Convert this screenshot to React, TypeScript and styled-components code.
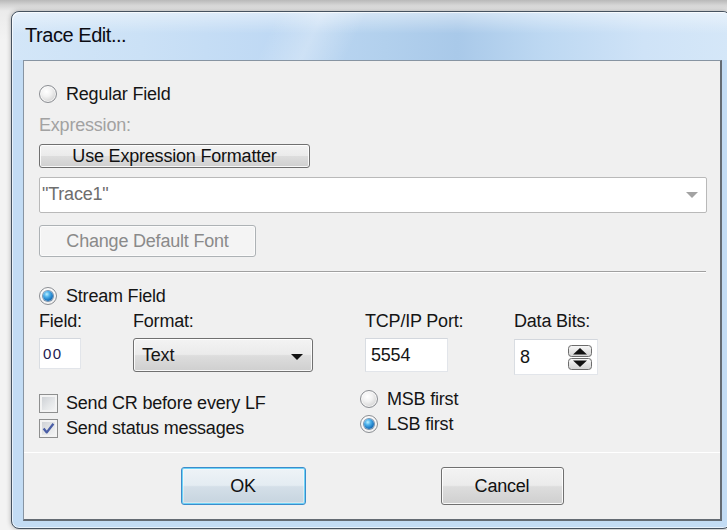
import React from "react";
import styled, { createGlobalStyle, css } from "styled-components";

const UI_FONT = `"Liberation Sans", Arial, sans-serif`;

const GlobalStyle = createGlobalStyle`
  html, body { margin: 0; padding: 0; }
  body {
    width: 727px;
    height: 530px;
    overflow: hidden;
    background: linear-gradient(180deg, #b9b9b9 0px, #d4d4d4 5px, #ebebeb 11px, #f3f3f3 40px);
    font-family: ${UI_FONT};
  }
`;

const Desktop = styled.div`
  width: 727px;
  height: 530px;
  box-sizing: border-box;
  padding: 11px 0 0 11px;
  overflow: hidden;
`;

const Window = styled.div`
  width: 720px;
  height: 518px;
  box-sizing: border-box;
  display: flex;
  flex-direction: column;
  border: 1px solid #46525f;
  border-radius: 8px;
  background: #c3dcf4;
  box-shadow: inset 0 0 0 1px rgba(255, 255, 255, 0.6), 0 0 5px rgba(0, 0, 0, 0.3);
  overflow: hidden;
`;

const TitleBar = styled.div`
  flex: none;
  height: 48px;
  box-sizing: border-box;
  display: flex;
  align-items: center;
  padding: 0 0 2px 13px;
  border-radius: 7px 7px 0 0;
  background:
    linear-gradient(115deg, rgba(255, 255, 255, 0) 36%, rgba(255, 255, 255, 0.28) 42%, rgba(255, 255, 255, 0) 48%),
    linear-gradient(180deg, rgba(255, 255, 255, 0.45) 0%, rgba(255, 255, 255, 0) 45%),
    linear-gradient(90deg, #d3e6f8 0%, #cbe1f6 18%, #bfd9f4 36%, #b2d0ed 52%, #a9c9e9 62%, #bdd8f2 74%, #cfe3f7 88%, #d5e7f8 100%);
  box-shadow: inset 1px 1px 0 rgba(255, 255, 255, 0.7);
`;

const Title = styled.span`
  font-size: 20px;
  letter-spacing: -0.45px;
  color: #0b0b12;
  white-space: nowrap;
`;

const Frame = styled.div`
  flex: 1;
  min-height: 0;
  padding: 0 8px 7px 11px;
`;

const Client = styled.div`
  height: 100%;
  box-sizing: border-box;
  display: flex;
  flex-direction: column;
  background: #f0f0f0;
  border-style: solid;
  border-width: 1px 2px 2px 1px;
  border-color: #8794a2 #646b73 #646b73 #8794a2;
`;

const Body = styled.div`
  flex: 1;
  display: flex;
  flex-direction: column;
  padding: 23px 13px 0 15px;
`;

const Text = styled.span<{ $disabled?: boolean }>`
  font-size: 18px;
  letter-spacing: -0.2px;
  line-height: 20px;
  white-space: nowrap;
  color: ${(p) => (p.$disabled ? "#a2a2a2" : "#151515")};
`;

const Caption = styled(Text)<{ $mt?: number }>`
  display: block;
  height: 20px;
  margin-top: ${(p) => p.$mt ?? 0}px;
`;

const OptionRow = styled.label<{ $mt?: number; $ml?: number; $gap?: number }>`
  display: flex;
  align-items: center;
  gap: ${(p) => p.$gap ?? 9}px;
  height: 20px;
  margin-top: ${(p) => p.$mt ?? 0}px;
  margin-left: ${(p) => p.$ml ?? 0}px;
`;

const RadioDot = styled.span<{ $checked?: boolean }>`
  position: relative;
  flex: none;
  width: 18px;
  height: 18px;
  box-sizing: border-box;
  border-radius: 50%;
  border: 1px solid #8b8e93;
  background: radial-gradient(circle at 40% 35%, #ffffff 0%, #f2f2f2 35%, #d4d4d4 75%, #c2c2c2 100%);
  box-shadow: inset 0 0 0 1px rgba(255, 255, 255, 0.7);
  ${(p) =>
    p.$checked &&
    css`
      background: radial-gradient(circle at 40% 35%, #ffffff 0%, #efefef 60%, #d0d0d0 100%);
      &::after {
        content: "";
        position: absolute;
        left: 3px;
        top: 3px;
        width: 10px;
        height: 10px;
        border-radius: 50%;
        background: radial-gradient(circle at 38% 32%, #bdefff 0%, #4fb3ec 30%, #1a76c0 65%, #0c4d8a 100%);
        box-shadow: 0 0 0 1px rgba(20, 70, 120, 0.55);
      }
    `}
`;

const CheckBox = styled.span`
  flex: none;
  display: flex;
  align-items: center;
  justify-content: center;
  width: 19px;
  height: 19px;
  box-sizing: border-box;
  border: 1px solid #8e8f8f;
  background: linear-gradient(135deg, #c9ccd1 0%, #e4e6e8 55%, #f8f8f8 100%);
  box-shadow: inset 0 0 0 2px #f3f3f3;
`;

const Check = () => (
  <svg width="15" height="15" viewBox="0 0 15 15">
    <path d="M2.6 7.6 L5.8 11.4 L12.4 2.8" fill="none" stroke="#4a5ea6" strokeWidth="2.3" strokeLinejoin="round" />
  </svg>
);

const PushButton = styled.button<{ $w: number; $h: number; $mt?: number; $default?: boolean }>`
  flex: none;
  width: ${(p) => p.$w}px;
  height: ${(p) => p.$h}px;
  margin-top: ${(p) => p.$mt ?? 0}px;
  padding: 0;
  font-family: ${UI_FONT};
  font-size: 18px;
  letter-spacing: -0.2px;
  color: #111;
  border: 1px solid #707070;
  border-radius: 3px;
  background: linear-gradient(180deg, #f3f3f3 0%, #ebebeb 48%, #dddddd 52%, #cfcfcf 100%);
  box-shadow: inset 0 0 0 1px rgba(255, 255, 255, 0.85);
  &:disabled {
    color: #8a8a8a;
    border-color: #adb2b5;
    background: #f4f4f4;
    box-shadow: inset 0 0 0 1px #fbfbfb;
  }
  ${(p) =>
    p.$default &&
    css`
      border-color: #3c8ccb;
      background: linear-gradient(180deg, #eef3f7 0%, #e4ecf2 48%, #d4dfe8 52%, #c6d4df 100%);
      box-shadow: inset 0 0 0 1px #6ed3f7, inset 0 0 0 2px rgba(255, 255, 255, 0.35);
    `}
`;

const ComboField = styled.div`
  height: 36px;
  margin-top: 9px;
  box-sizing: border-box;
  display: flex;
  align-items: center;
  justify-content: space-between;
  padding: 0 8px 3px 2px;
  background: #ffffff;
  border: 1px solid #b9b9b9;
  border-radius: 2px;
`;

const ComboText = styled(Text)`
  color: #6e6e6e;
`;

const Arrow = styled.span<{ $color: string }>`
  flex: none;
  width: 0;
  height: 0;
  border-left: 6px solid transparent;
  border-right: 6px solid transparent;
  border-top: 6px solid ${(p) => p.$color};
  margin-top: 3px;
`;

const Separator = styled.div`
  height: 0;
  margin: 14px 1px 0 1px;
  border-top: 1px solid #a0a0a0;
  border-bottom: 1px solid #ffffff;
`;

const StreamGrid = styled.div`
  display: grid;
  grid-template-columns: 94px 232px 149px 1fr;
  grid-template-rows: 20px 37px auto;
  row-gap: 7px;
  margin-top: 5px;
  align-items: start;
`;

const TextBox = styled.div<{ $w: number; $h: number; $pl: number; $mt?: number }>`
  width: ${(p) => p.$w}px;
  height: ${(p) => p.$h}px;
  margin-top: ${(p) => p.$mt ?? 0}px;
  box-sizing: border-box;
  display: flex;
  align-items: center;
  justify-content: space-between;
  padding: 0 5px 0 ${(p) => p.$pl}px;
  background: #ffffff;
  border: 1px solid #e2e5ea;
  border-top-color: #d3d7dd;
  border-left-color: #d9dde2;
`;

const FieldText = styled.span`
  font-size: 15px;
  letter-spacing: 1.5px;
  color: #1c2050;
`;

const SelectBox = styled.div`
  width: 180px;
  height: 34px;
  box-sizing: border-box;
  display: flex;
  align-items: center;
  justify-content: space-between;
  padding: 0 9px 0 8px;
  border: 1px solid #707070;
  border-radius: 3px;
  background: linear-gradient(180deg, #f3f3f3 0%, #ebebeb 48%, #dddddd 52%, #cfcfcf 100%);
  box-shadow: inset 0 0 0 1px rgba(255, 255, 255, 0.85);
`;

const OptionStack = styled.div<{ $mt: number; $span?: string }>`
  display: flex;
  flex-direction: column;
  gap: 5px;
  margin-top: ${(p) => p.$mt}px;
  grid-column: ${(p) => p.$span ?? "auto"};
`;

const Footer = styled.div`
  flex: none;
  height: 67px;
  box-sizing: border-box;
  display: flex;
  justify-content: center;
  gap: 135px;
  padding: 14px 0 0 0;
  border-top: 1px solid #ffffff;
`;

const Spinner = () => (
  <svg width="24" height="25" viewBox="0 0 24 25">
    <defs>
      <linearGradient id="spinFace" x1="0" y1="0" x2="0" y2="1">
        <stop offset="0" stopColor="#f8f8f8" />
        <stop offset="1" stopColor="#d3d3d3" />
      </linearGradient>
    </defs>
    <rect x="0.5" y="0.5" width="23" height="11" rx="3" fill="url(#spinFace)" stroke="#6c6c6c" />
    <path d="M5 9.5 L19 9.5 L12 3 Z" fill="#111" />
    <rect x="0.5" y="13.5" width="23" height="11" rx="3" fill="url(#spinFace)" stroke="#6c6c6c" />
    <path d="M5 15.5 L19 15.5 L12 22 Z" fill="#111" />
  </svg>
);

export default function App() {
  return (
    <>
      <GlobalStyle />
      <Desktop>
        <Window>
          <TitleBar>
            <Title>Trace Edit...</Title>
          </TitleBar>
          <Frame>
            <Client>
              <Body>
                <OptionRow>
                  <RadioDot />
                  <Text>Regular Field</Text>
                </OptionRow>
                <Caption $disabled $mt={11}>
                  Expression:
                </Caption>
                <PushButton $w={271} $h={24} $mt={9}>
                  Use Expression Formatter
                </PushButton>
                <ComboField>
                  <ComboText>"Trace1"</ComboText>
                  <Arrow $color="#a3a3a3" />
                </ComboField>
                <PushButton $w={217} $h={32} $mt={12} disabled>
                  Change Default Font
                </PushButton>
                <Separator />
                <OptionRow $mt={13}>
                  <RadioDot $checked />
                  <Text>Stream Field</Text>
                </OptionRow>
                <StreamGrid>
                  <Caption>Field:</Caption>
                  <Caption>Format:</Caption>
                  <Caption>TCP/IP Port:</Caption>
                  <Caption>Data Bits:</Caption>

                  <TextBox $w={42} $h={31} $pl={3}>
                    <FieldText>00</FieldText>
                  </TextBox>
                  <SelectBox>
                    <Text>Text</Text>
                    <Arrow $color="#111" />
                  </SelectBox>
                  <TextBox $w={83} $h={34} $pl={5}>
                    <Text>5554</Text>
                  </TextBox>
                  <TextBox $w={84} $h={36} $pl={5} $mt={1}>
                    <Text>8</Text>
                    <Spinner />
                  </TextBox>

                  <OptionStack $mt={11} $span="1 / 3">
                    <OptionRow $gap={8}>
                      <CheckBox />
                      <Text>Send CR before every LF</Text>
                    </OptionRow>
                    <OptionRow $gap={8}>
                      <CheckBox>
                        <Check />
                      </CheckBox>
                      <Text>Send status messages</Text>
                    </OptionRow>
                  </OptionStack>
                  <OptionStack $mt={7}>
                    <OptionRow $ml={-5}>
                      <RadioDot />
                      <Text>MSB first</Text>
                    </OptionRow>
                    <OptionRow $ml={-5}>
                      <RadioDot $checked />
                      <Text>LSB first</Text>
                    </OptionRow>
                  </OptionStack>
                </StreamGrid>
              </Body>
              <Footer>
                <PushButton $w={125} $h={38} $default>
                  OK
                </PushButton>
                <PushButton $w={123} $h={38}>
                  Cancel
                </PushButton>
              </Footer>
            </Client>
          </Frame>
        </Window>
      </Desktop>
    </>
  );
}
